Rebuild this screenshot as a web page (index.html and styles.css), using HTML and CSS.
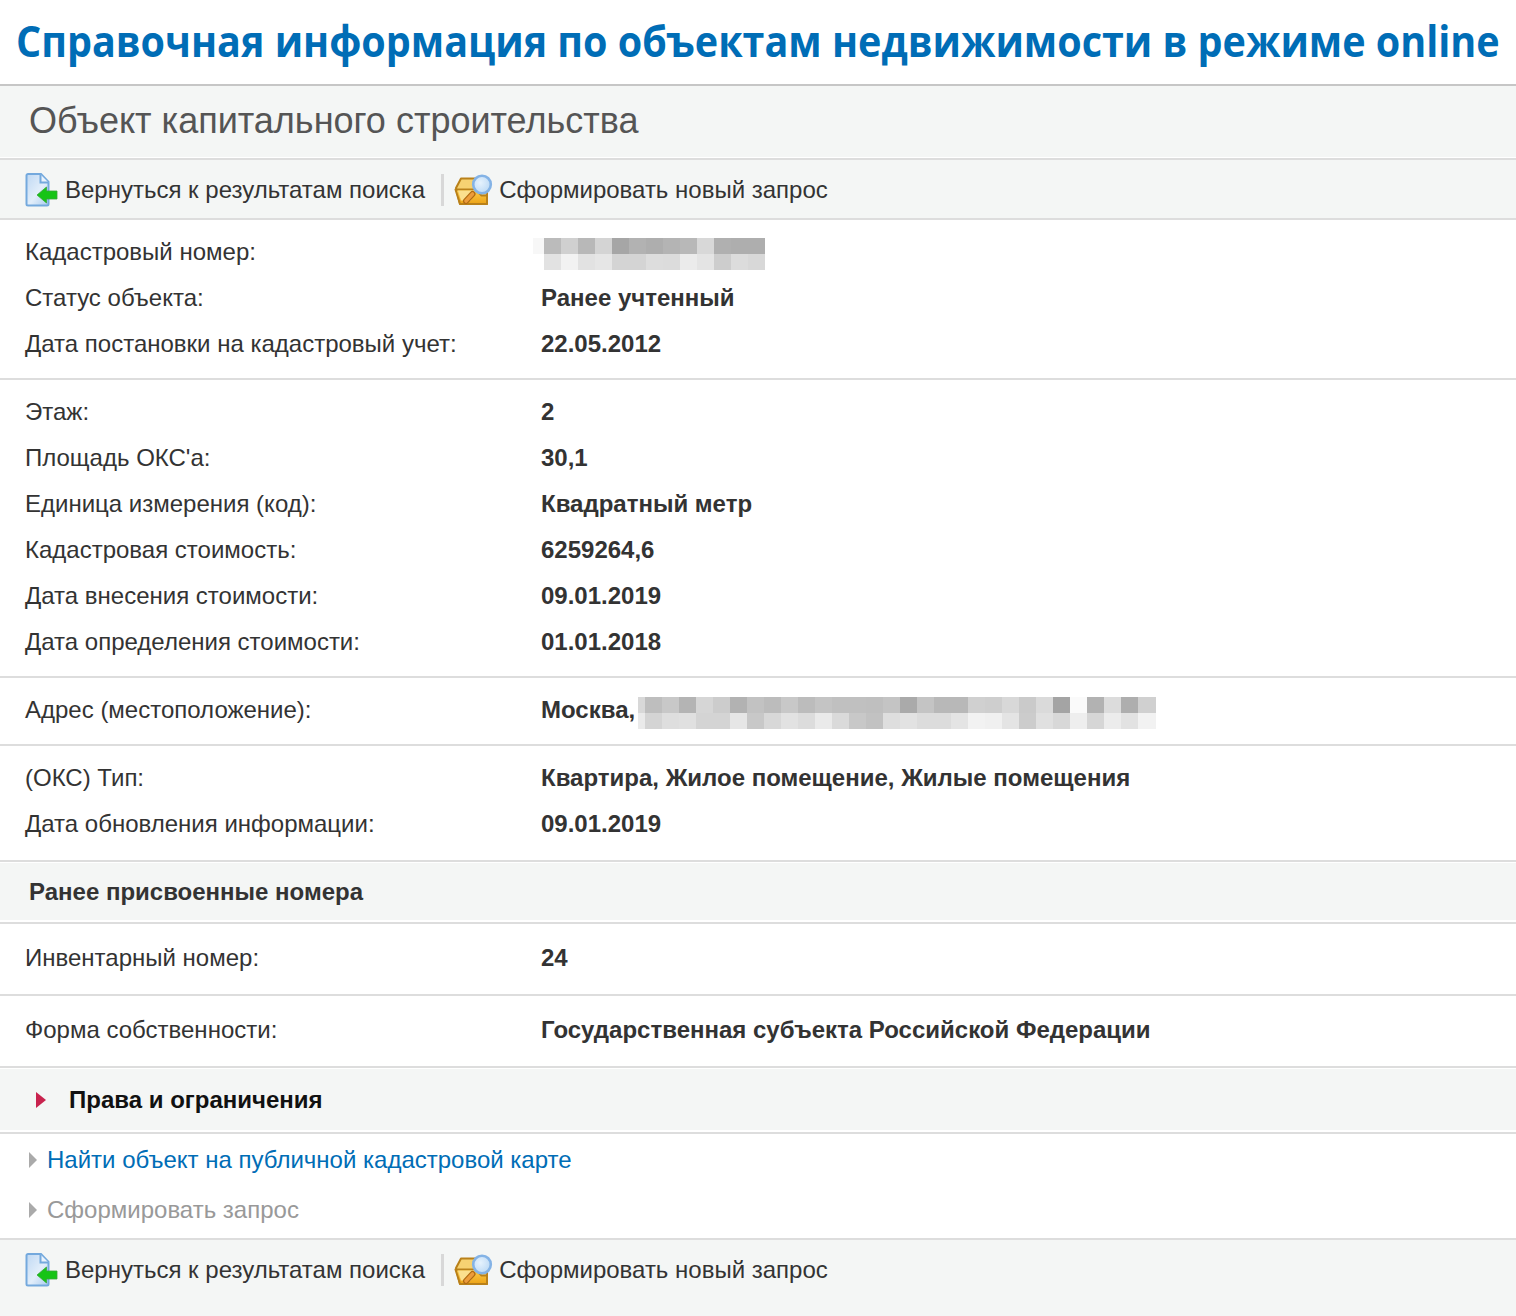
FILE: index.html
```html
<!DOCTYPE html>
<html lang="ru">
<head>
<meta charset="utf-8">
<title>Объект капитального строительства</title>
<link rel="stylesheet" href="styles.css">
</head>
<body>
<svg class="sprite" aria-hidden="true">
  <defs>
    <linearGradient id="docfill" x1="0" y1="0" x2="1" y2="1"><stop offset="0" stop-color="#bfd8f3"/><stop offset=".55" stop-color="#e2eefa"/><stop offset="1" stop-color="#a9cbee"/></linearGradient>
    <linearGradient id="folderfill" x1="0" y1="0" x2="0" y2="1"><stop offset="0" stop-color="#fbcf50"/><stop offset="1" stop-color="#eda316"/></linearGradient>
    <radialGradient id="glassfill" cx=".4" cy=".4" r=".7"><stop offset="0" stop-color="#e6f2fd"/><stop offset="1" stop-color="#b8d7f4"/></radialGradient>
    <symbol id="icon-back" viewBox="0 0 34 34">
      <path d="M1.500 2.500a1.500 1.500 0 0 1 1.500-1.500h13l7.500 8v22a1.500 1.500 0 0 1-1.500 1.500H3a1.500 1.500 0 0 1-1.500-1.500z" fill="url(#docfill)" stroke="#74a9dd" stroke-width="2"/>
      <path d="M15.500 1.500v8h8" fill="#eaf3fc" stroke="#74a9dd" stroke-width="2"/>
      <path d="M12 22l9.500-8v4H32v8H21.500v4z" fill="#16c416" stroke="#3aa53a" stroke-width=".8" stroke-linejoin="round"/>
    </symbol>
    <symbol id="icon-new" viewBox="0 0 40 32">
      <path d="M2 14l5-9.500h14l4 5.500h8v20H6z" fill="#f6d272" stroke="#b9811a" stroke-width="2" stroke-linejoin="round"/>
      <path d="M1.500 15.500h20l6 6H33v8.500H6z" fill="url(#folderfill)" stroke="#b9811a" stroke-width="2" stroke-linejoin="round"/>
      <path d="M4 16.500h16l-3 10H7z" fill="#fbdf8e"/>
      <path d="M12 27l6.500-7" stroke="#b06a12" stroke-width="6" stroke-linecap="round"/>
      <path d="M12 27l6.500-7" stroke="#ec9c3c" stroke-width="3.600" stroke-linecap="round"/>
      <circle cx="28" cy="10.500" r="8.800" fill="url(#glassfill)" stroke="#84b3e6" stroke-width="2.600"/>
    </symbol>
  </defs>
</svg>
<h1 class="site-title"><span class="site-title-text">Справочная информация по объектам недвижимости в режиме online</span></h1>
<h2 class="page-title">Объект капитального строительства</h2>
<nav class="toolbar toolbar-top">
  <a class="tool"><svg class="icon-back"><use href="#icon-back"/></svg>Вернуться к результатам поиска</a>
  <span class="tool-sep"></span>
  <a class="tool"><svg class="icon-new"><use href="#icon-new"/></svg>Сформировать новый запрос</a>
</nav>
<section class="group">
  <div class="row"><span class="label">Кадастровый номер:</span><span class="value"><span class="blur blur-num"></span></span></div>
  <div class="row"><span class="label">Статус объекта:</span><span class="value">Ранее учтенный</span></div>
  <div class="row"><span class="label">Дата постановки на кадастровый учет:</span><span class="value">22.05.2012</span></div>
</section>
<section class="group">
  <div class="row"><span class="label">Этаж:</span><span class="value">2</span></div>
  <div class="row"><span class="label">Площадь ОКС'а:</span><span class="value">30,1</span></div>
  <div class="row"><span class="label">Единица измерения (код):</span><span class="value">Квадратный метр</span></div>
  <div class="row"><span class="label">Кадастровая стоимость:</span><span class="value">6259264,6</span></div>
  <div class="row"><span class="label">Дата внесения стоимости:</span><span class="value">09.01.2019</span></div>
  <div class="row"><span class="label">Дата определения стоимости:</span><span class="value">01.01.2018</span></div>
</section>
<section class="group">
  <div class="row"><span class="label">Адрес (местоположение):</span><span class="value">Москва,<span class="blur blur-addr"></span></span></div>
</section>
<section class="group group-last">
  <div class="row"><span class="label">(ОКС) Тип:</span><span class="value">Квартира, Жилое помещение, Жилые помещения</span></div>
  <div class="row"><span class="label">Дата обновления информации:</span><span class="value">09.01.2019</span></div>
</section>
<h3 class="subhead">Ранее присвоенные номера</h3>
<section class="group group-single">
  <div class="row"><span class="label">Инвентарный номер:</span><span class="value">24</span></div>
</section>
<section class="group group-single">
  <div class="row"><span class="label">Форма собственности:</span><span class="value">Государственная субъекта Российской Федерации</span></div>
</section>
<h3 class="rights"><span class="arrow arrow-red"></span>Права и ограничения</h3>
<ul class="links">
  <li class="link-item"><span class="arrow arrow-grey"></span><a class="link">Найти объект на публичной кадастровой карте</a></li>
  <li class="link-item"><span class="arrow arrow-grey"></span><a class="link link-off">Сформировать запрос</a></li>
</ul>
<nav class="toolbar toolbar-bottom">
  <a class="tool"><svg class="icon-back"><use href="#icon-back"/></svg>Вернуться к результатам поиска</a>
  <span class="tool-sep"></span>
  <a class="tool"><svg class="icon-new"><use href="#icon-new"/></svg>Сформировать новый запрос</a>
</nav>
</body>
</html>
```
FILE: styles.css
```css
* { box-sizing: border-box; }
html, body { margin: 0; padding: 0; }
body { width: 1516px; height: 1316px; overflow: hidden; background: #fff; color: #333; font-family: "Liberation Sans", Arial, sans-serif; font-size: 24px; }
h1, h2, h3, ul { margin: 0; padding: 0; }
.sprite { position: absolute; width: 0; height: 0; }
.site-title { height: 86px; border-bottom: 2px solid #c6c6c6; padding-left: 16px; font-family: "Open Sans", sans-serif; font-size: 43px; line-height: 82px; font-weight: 700; color: #006db6; white-space: nowrap; overflow: hidden; }
.site-title-text { display: inline-block; transform: scaleX(.9185); transform-origin: left center; }
.page-title { height: 71px; margin-bottom: 1px; background: #f4f6f5; padding-left: 29px; font-size: 36px; line-height: 69px; font-weight: 400; color: #555; }
.toolbar { background: #f4f6f5; border-top: 2px solid #ddd; padding-left: 25px; display: flex; align-items: center; }
.toolbar-top { height: 62px; padding-top: 2px; border-bottom: 2px solid #ddd; }
.toolbar-bottom { height: 78px; padding-bottom: 16px; }
.tool { display: flex; align-items: center; color: #333; }
.icon-back { width: 34px; height: 34px; margin-right: 6px; }
.icon-new { width: 40px; height: 32px; margin-right: 5px; margin-left: -1px; }
.tool-sep { width: 3px; height: 32px; background: #d8d8d8; margin: 0 11px 0 16px; }
.group { padding: 9px 0 11px; border-bottom: 2px solid #ddd; }
.group-last { padding-bottom: 13px; }
.group-single { padding: 11px 0 13px; }
.row { display: flex; height: 46px; align-items: center; padding-left: 25px; }
.label { width: 516px; flex: none; }
.value { font-weight: 700; display: flex; align-items: center; }
.blur { display: block; }
.blur-num { margin: 4px 0 0 -8px; width: 232px; height: 32px; background:
  linear-gradient(to right, #f7f7f7 0 11px, #bbb 11px 28px, #d0d0d0 28px 45px, #b8b8b8 45px 62px, #d4d4d4 62px 79px, #a6a6a6 79px 96px, #b2b2b2 96px 113px, #aeaeae 113px 130px, #b4b4b4 130px 147px, #b8b8b8 147px 164px, #d8d8d8 164px 181px, #b0b0b0 181px 198px, #aeaeae 198px 232px) top / 100% 16px no-repeat,
  linear-gradient(to right, #fff 0 11px, #e2e2e2 11px 28px, #f2f2f2 28px 45px, #e2e2e2 45px 62px, #e6e6e6 62px 79px, #d4d4d4 79px 113px, #ddd 113px 130px, #dcdcdc 130px 147px, #ebebeb 147px 164px, #e4e4e4 164px 181px, #cdcdcd 181px 198px, #dcdcdc 198px 215px, #d8d8d8 215px 232px) bottom / 100% 16px no-repeat; }
.blur-addr { margin: 6px 0 0 3px; width: 518px; height: 32px; background:
  linear-gradient(to right, #d8d8d8 0 7px, #bebebe 7px 24px, #c8c8c8 24px 41px, #b4b4b4 41px 58px, #d6d6d6 58px 75px, #ccc 75px 92px, #b2b2b2 92px 109px, #c2c2c2 109px 126px, #bcbcbc 126px 143px, #c8c8c8 143px 160px, #bcbcbc 160px 177px, #c4c4c4 177px 194px, #c0c0c0 194px 228px, #bfbfbf 228px 245px, #c4c4c4 245px 262px, #aaa 262px 279px, #c4c4c4 279px 296px, #b8b8b8 296px 330px, #d0d0d0 330px 347px, #cecece 347px 364px, #d8d8d8 364px 381px, #cacaca 381px 398px, #dadada 398px 415px, #a4a4a4 415px 432px, #fafafa 432px 449px, #b2b2b2 449px 466px, #dcdcdc 466px 483px, #aeaeae 483px 500px, #d0d0d0 500px 518px) top / 100% 16px no-repeat,
  linear-gradient(to right, #eaeaea 0 7px, #d4d4d4 7px 24px, #dedede 24px 41px, #e0e0e0 41px 58px, #d4d4d4 58px 92px, #e6e6e6 92px 109px, #c8c8c8 109px 126px, #d8d8d8 126px 143px, #e2e2e2 143px 160px, #dcdcdc 160px 177px, #eaeaea 177px 194px, #dadada 194px 211px, #c8c8c8 211px 228px, #c2c2c2 228px 245px, #dedede 245px 262px, #e2e2e2 262px 279px, #dcdcdc 279px 313px, #e4e4e4 313px 330px, #f2f2f2 330px 347px, #f0f0f0 347px 364px, #e4e4e4 364px 381px, #ccc 381px 398px, #e0e0e0 398px 415px, #d8d8d8 415px 432px, #eee 432px 449px, #d6d6d6 449px 466px, #ececec 466px 483px, #e2e2e2 483px 500px, #f2f2f2 500px 518px) bottom / 100% 16px no-repeat; }
.subhead { height: 61px; margin-top: 1px; background: #f4f6f5; border-bottom: 2px solid #ddd; box-shadow: inset 0 -2px 0 #fff; padding-left: 29px; line-height: 57px; font-size: 24px; font-weight: 700; color: #333; }
.rights { height: 65px; margin-top: 1px; background: #f4f6f5; border-bottom: 2px solid #ddd; box-shadow: inset 0 -2px 0 #fff; padding: 0 0 2px 36px; display: flex; align-items: center; font-size: 24px; font-weight: 700; color: #111; }
.arrow { display: block; width: 0; height: 0; border-style: solid; border-color: transparent; }
.arrow-red { border-width: 8px 0 8px 10px; border-left-color: #c8234e; margin-right: 23px; }
.arrow-grey { border-width: 8px 0 8px 8px; border-left-color: #aaa; margin-right: 10px; }
.links { list-style: none; padding: 1px 0 3px 29px; }
.link-item { display: flex; align-items: center; height: 50px; }
.link { color: #006db6; }
.link-off { color: #999; }
```
